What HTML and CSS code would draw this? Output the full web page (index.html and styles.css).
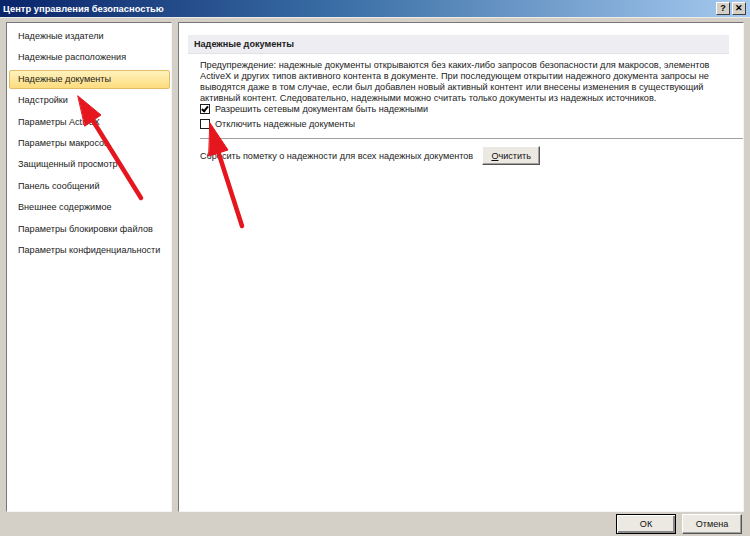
FILE: index.html
```html
<!DOCTYPE html>
<html lang="ru">
<head>
  <meta charset="UTF-8">
  <title>Центр управления безопасностью</title>
  <link rel="stylesheet" href="styles.css">
</head>
<body>

  <div class="window">
    <div class="titlebar">
      <span class="title">Центр управления безопасностью</span>
      <span class="caption-btns">
        <span class="cap-btn">?</span>
        <span class="cap-btn close">✕</span>
      </span>
    </div>

    <div class="panes">
      <ul class="nav">
        <li>Надежные издатели</li>
        <li>Надежные расположения</li>
        <li class="active">Надежные документы</li>
        <li>Надстройки</li>
        <li>Параметры ActiveX</li>
        <li>Параметры макросов</li>
        <li>Защищенный просмотр</li>
        <li>Панель сообщений</li>
        <li>Внешнее содержимое</li>
        <li>Параметры блокировки файлов</li>
        <li>Параметры конфиденциальности</li>
      </ul>

      <div class="content">
        <div class="section-head">Надежные документы</div>
        <div class="section-body">
          <p class="warning">Предупреждение: надежные документы открываются без каких-либо запросов безопасности для макросов, элементов<br>
            ActiveX и других типов активного контента в документе. При последующем открытии надежного документа запросы не<br>
            выводятся даже в том случае, если был добавлен новый активный контент или внесены изменения в существующий<br>
            активный контент. Следовательно, надежными можно считать только документы из надежных источников.</p>
          <label class="check first"><span class="box checked"></span>Разрешить сетевым документам быть надежными</label>
          <label class="check"><span class="box"></span>Отключить надежные документы</label>
          <div class="separator"></div>
          <div class="reset-row">
            <span>Сбросить пометку о надежности для всех надежных документов</span>
            <button class="btn small"><u>О</u>чистить</button>
          </div>
        </div>
      </div>
    </div>

    <div class="footer">
      <button class="btn default">ОК</button>
      <button class="btn">Отмена</button>
    </div>

    <!-- красные стрелки поверх окна -->
    <svg class="arrows" width="750" height="536" viewBox="0 0 750 536">
      <g fill="#e5161e" stroke="#e5161e" stroke-linecap="round" stroke-linejoin="round">
        <line x1="141" y1="198" x2="90" y2="116" stroke-width="4.5"/>
        <polygon points="78,96 101,115 85,126" stroke-width="1"/>
        <line x1="242" y1="226" x2="217" y2="148" stroke-width="4.5"/>
        <polygon points="210,123 228,150 209,156" stroke-width="1"/>
      </g>
    </svg>
  </div>

</body>
</html>
```

FILE: styles.css
```css
/* Окно */
body {
  margin: 0;
  background: #d4d0c8;
  font-family: "Liberation Sans", Arial, sans-serif;
  font-size: 9.1px;
  color: #222;
}
.window {
  position: relative;
  width: 750px;
  height: 536px;
  display: flex;
  flex-direction: column;
  overflow: hidden;
}
/* Заголовок */
.titlebar {
  height: 17px;
  background: linear-gradient(to right, #0a246a 0%, #3a6ea5 45%, #a6caf0 100%);
  display: flex;
  align-items: center;
  justify-content: space-between;
  padding: 0 4px 0 3px;
  border-bottom: 1px solid #eeece6;
}
.title {
  color: #fff;
  font-weight: bold;
  font-size: 9.4px;
}
.caption-btns {
  display: flex;
  gap: 2px;
}
.cap-btn {
  width: 12px;
  height: 11px;
  background: #d4d0c8;
  border: 1px solid;
  border-color: #fff #404040 #404040 #fff;
  font-size: 9px;
  font-weight: bold;
  line-height: 11px;
  text-align: center;
  color: #000;
}
/* Две панели */
.panes {
  display: flex;
  gap: 6px;
  padding: 4px 6px 0 6px;
  height: 490px;
}
.nav {
  list-style: none;
  margin: 0;
  width: 161px;
  padding: 4px 1px 0 2px;
  background: #fff;
  border: 1px solid;
  border-color: #777 #f4f4f4 #f4f4f4 #777;
}
.nav li {
  height: 17px;
  line-height: 17px;
  margin-bottom: 2.4px;
  padding-left: 8px;
  border: 1px solid transparent;
  white-space: nowrap;
  overflow: hidden;
}
.nav li.active {
  background: linear-gradient(#fff2bd, #fddc7e);
  border-color: #e2bd66;
  border-radius: 2px;
}
.content {
  flex: 1;
  background: #fff;
  border: 1px solid;
  border-color: #777 #f4f4f4 #f4f4f4 #777;
  padding: 12px 0 0 9px;
}
.section-head {
  margin-right: 14px;
  height: 18px;
  line-height: 18px;
  padding-left: 6px;
  background: #eeeef2;
  border-bottom: 1px solid #e2e2e6;
  font-weight: bold;
}
.section-body {
  padding: 6px 0 0 12px;
}
.warning {
  margin: 0;
  font-size: 9.2px;
  line-height: 11px;
  white-space: nowrap;
}
.check {
  display: flex;
  align-items: center;
  height: 15px;
}
.check.first {
  margin-top: -3px;
}
.box {
  width: 8px;
  height: 8px;
  border: 1px solid #1c1c1c;
  margin-right: 5px;
  position: relative;
}
.box.checked::after {
  content: '';
  position: absolute;
  left: 2px;
  top: 0;
  width: 2px;
  height: 5px;
  border: solid #000;
  border-width: 0 2px 2px 0;
  transform: rotate(40deg);
}
.separator {
  border-top: 1px solid #a0a0a0;
  margin: 7px 0 7px;
}
.reset-row {
  display: flex;
  align-items: center;
  gap: 9px;
}
/* Кнопки */
.btn {
  font: inherit;
  color: #111;
  background: #ece9e2;
  border: 1px solid;
  border-color: #fff #555 #555 #fff;
  box-shadow: inset -1px -1px 0 #a0a0a0;
  width: 60px;
  height: 20px;
  padding: 0;
}
.btn.small {
  width: 58px;
  height: 19px;
}
.btn.default {
  border: 1px solid #000;
  box-shadow: inset 1px 1px 0 #fff, inset -2px -2px 0 #888;
}
.footer {
  display: flex;
  justify-content: flex-end;
  gap: 6px;
  padding: 2px 8px 0 0;
}
/* Стрелки */
.arrows {
  position: absolute;
  left: 0;
  top: 0;
  pointer-events: none;
}
```
